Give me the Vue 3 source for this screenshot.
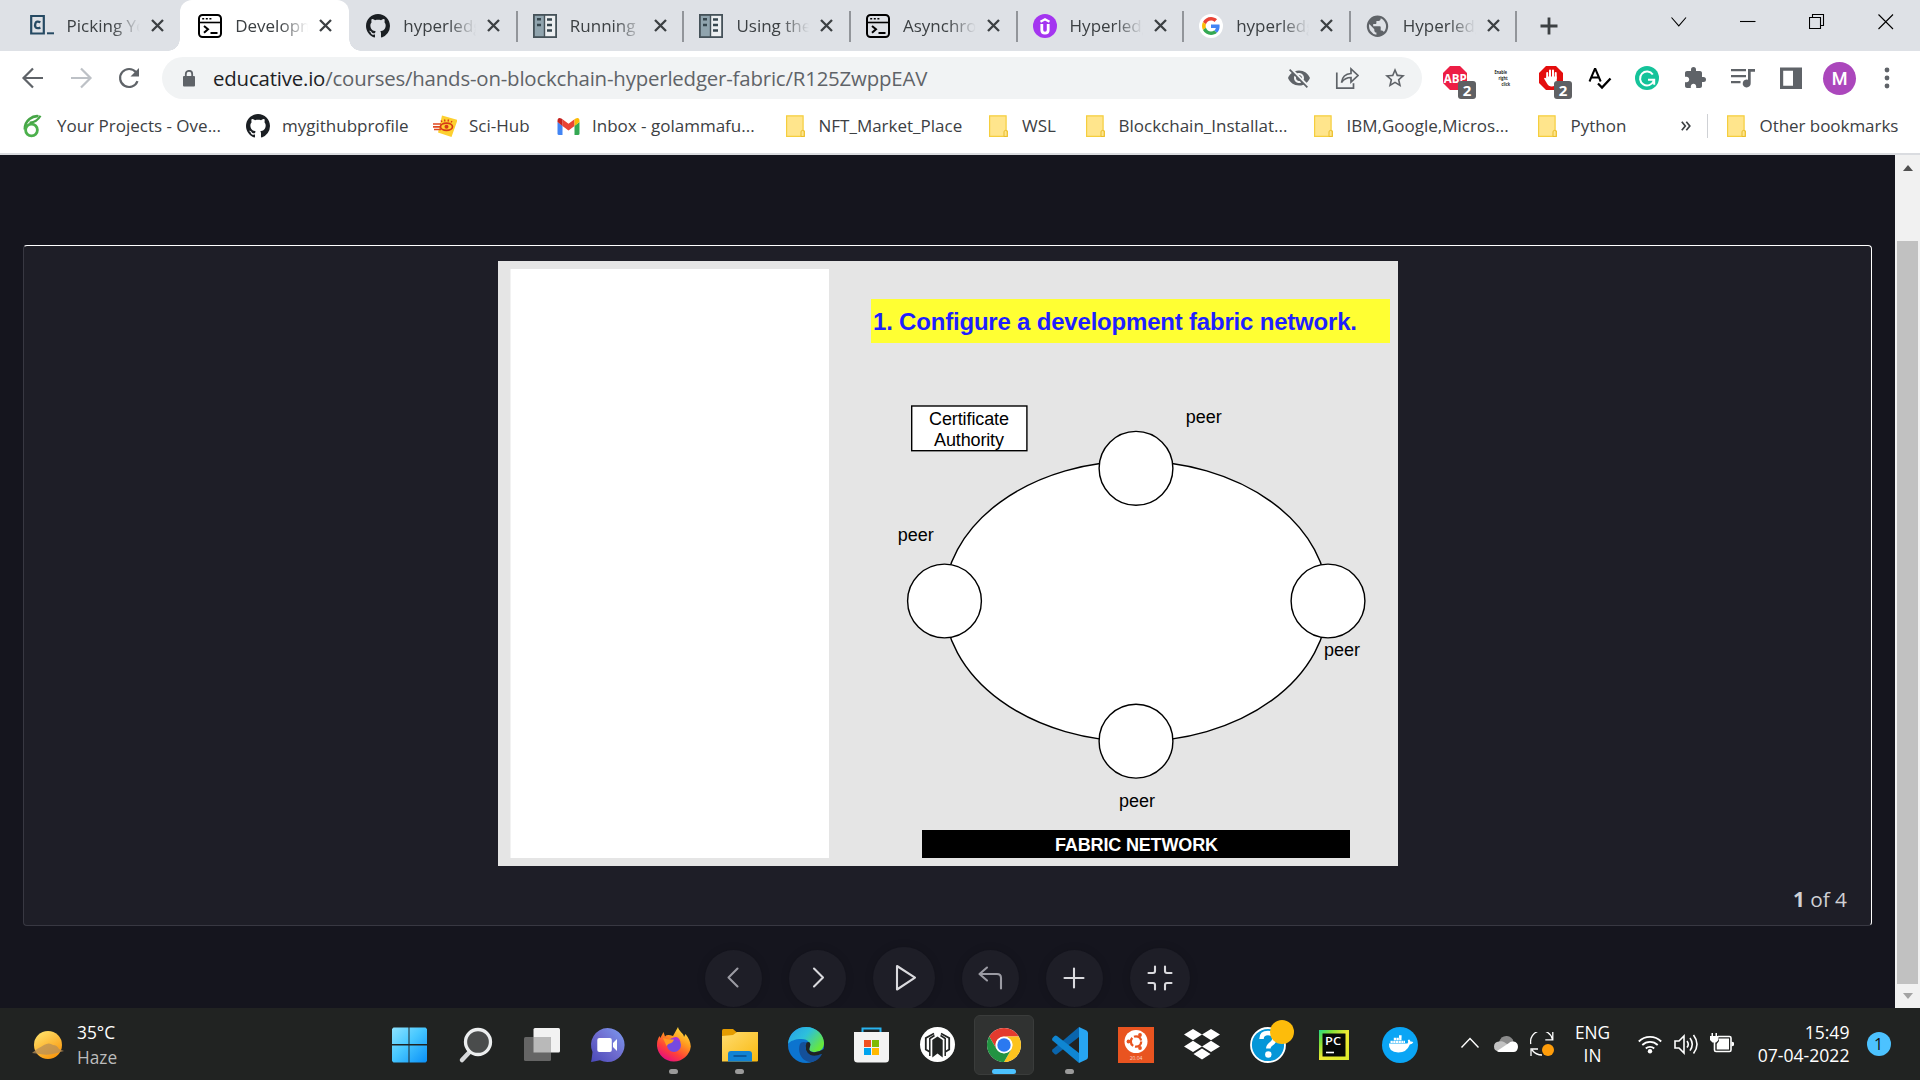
<script setup>
const octocat = '<path fill="#1b1f23" transform="scale(1.5)" d="M8 0C3.58 0 0 3.58 0 8c0 3.54 2.29 6.53 5.47 7.59.4.07.55-.17.55-.38 0-.19-.01-.82-.01-1.49-2.01.37-2.53-.49-2.69-.94-.09-.23-.48-.94-.82-1.13-.28-.15-.68-.52-.01-.53.63-.01 1.08.58 1.23.82.72 1.21 1.87.87 2.33.66.07-.52.28-.87.51-1.07-1.78-.2-3.64-.89-3.64-3.95 0-.87.31-1.59.82-2.15-.08-.2-.36-1.02.08-2.12 0 0 .67-.21 2.2.82.64-.18 1.32-.27 2-.27s1.36.09 2 .27c1.53-1.04 2.2-.82 2.2-.82.44 1.1.16 1.92.08 2.12.51.56.82 1.27.82 2.15 0 3.07-1.87 3.75-3.65 3.95.29.25.54.73.54 1.48 0 1.07-.01 1.93-.01 2.2 0 .21.15.46.55.38A8.01 8.01 0 0 0 16 8c0-4.42-3.58-8-8-8z"/>'
const terminal = '<rect x="1" y="1" width="22" height="22" rx="3.5" fill="none" stroke="#000" stroke-width="2"/><path d="M1 8.5h22" stroke="#000" stroke-width="1.6"/><path d="M4.2 4.8h2M7.8 4.8h2M11.4 4.8h2" stroke="#000" stroke-width="1.6"/><path d="M6 12l4 3.3-4 3.5M12.500 19h7" fill="none" stroke="#000" stroke-width="2"/>'
const docs = '<path fill="#455259" d="M0 0h24v24H0z"/><path fill="#90a4ae" d="M1.800 1.800h9v20.400h-9z"/><path fill="#eceff1" d="M12.200 1.800h10v20.400h-10z"/><path d="M4 5.200h4M4 11h4M14 5.500h5M14 11h5M14 16.500h5" stroke="#37474f" stroke-width="2.600"/>'
const folder = '<path fill="#ffe58c" stroke="#f5ce3e" stroke-width="1.200" d="M3.600 1.800h16.500v14.600l1.300.8v5.200H3.600z"/><path fill="#ffe58c" stroke="#e9bd2b" stroke-width="1" d="M18 22.500v-4.600q0-1.500 1.600-1.500t1.600 1.500v4.500z"/>'

const tabs = [
  { title: 'Picking Your', icon: '<path fill="none" stroke="#264a63" stroke-width="2.200" d="M1.200 2h12.600v17.500H1.200z"/><path stroke="#264a63" stroke-width="2" d="M17 19.300h7"/><path d="M10.400 8.200q-4-1.700-5 1.200-.8 2.200.2 3.800 1.400 1.800 4.800.4" fill="none" stroke="#264a63" stroke-width="2.300"/>' },
  { title: 'Development', icon: terminal, active: true },
  { title: 'hyperledger', icon: octocat },
  { title: 'Running', icon: docs },
  { title: 'Using the', icon: docs },
  { title: 'Asynchronous', icon: terminal },
  { title: 'Hyperledger', icon: '<circle cx="12" cy="12" r="12" fill="#a435f0"/><path d="M8.800 10v6q0 3.200 3.200 3.200t3.200-3.200v-6" fill="none" stroke="#fff" stroke-width="2.800"/><path d="M7.500 7.800L12 5.300l4.500 2.500" fill="none" stroke="#fff" stroke-width="2.200"/>' },
  { title: 'hyperledger', icon: '<circle cx="12" cy="12" r="12" fill="#fff"/><g transform="translate(3 3) scale(.375)"><path fill="#EA4335" d="M24 9.500c3.540 0 6.710 1.220 9.210 3.600l6.850-6.850C35.900 2.380 30.470 0 24 0 14.620 0 6.510 5.380 2.560 13.220l7.980 6.190C12.430 13.720 17.740 9.500 24 9.500z"/><path fill="#4285F4" d="M46.980 24.550c0-1.570-.15-3.090-.38-4.550H24v9.020h12.940c-.58 2.960-2.260 5.480-4.780 7.180l7.730 6c4.510-4.180 7.090-10.360 7.090-17.650z"/><path fill="#FBBC05" d="M10.530 28.590c-.48-1.450-.76-2.990-.76-4.590s.27-3.140.76-4.590l-7.980-6.190C.92 16.460 0 20.120 0 24c0 3.880.92 7.540 2.560 10.780l7.970-6.190z"/><path fill="#34A853" d="M24 48c6.480 0 11.930-2.130 15.890-5.810l-7.730-6c-2.150 1.450-4.920 2.300-8.160 2.300-6.260 0-11.570-4.220-13.470-9.910l-7.980 6.190C6.510 42.620 14.620 48 24 48z"/></g>' },
  { title: 'Hyperledger', icon: '<path fill="#5f6368" d="M11.500 1.500a10.700 10.700 0 100 21.400 10.700 10.700 0 000-21.400zm-1.100 19.200a8.600 8.600 0 01-7.100-10.600l5 5.200v1.100c0 1.200 1 2.100 2.100 2.100zm7.400-2.700a2.100 2.100 0 00-2-1.500h-1.100v-3.200c0-.6-.5-1-1.100-1H7.200V10h2.200c.6 0 1-.4 1-1V6.900h2.200c1.200 0 2.100-1 2.100-2.100v-.5a8.600 8.600 0 013.100 13.700z"/>' },
]

const bookmarks = [
  { label: 'Your Projects - Ove...', w: 225, icon: '<path d="M17.500 2.200C12 1.500 3.500 6 3.800 15.500" fill="none" stroke="#46a546" stroke-width="2.600"/><circle cx="10.500" cy="16" r="5.900" fill="none" stroke="#4cb04c" stroke-width="2.800"/><path d="M19.500 1.800q-4 7-11 6.700" fill="none" stroke="#46a546" stroke-width="2.200"/>' },
  { label: 'mygithubprofile', w: 187, icon: octocat },
  { label: 'Sci-Hub', w: 123, icon: '<path fill="#fdd030" d="M9 1.500l15.500 4.500-6 17L5 18.500l1.500-6z"/><path d="M0 10h8M0 12.800h8M1 15.500h7" stroke="#df4a20" stroke-width="1.700"/><ellipse cx="13.500" cy="12.800" rx="6" ry="3.600" fill="none" stroke="#d63a17" stroke-width="1.700"/><circle cx="13.500" cy="12.800" r="2" fill="#d63a17"/><path d="M9 8L8 6.500M12 7.500l-.5-2M15 7.500l.5-2M18 8.500l1-1.500" stroke="#d63a17" stroke-width="1.300"/>' },
  { label: 'Inbox - golammafu...', w: 226.500, icon: '<path fill="#4285f4" d="M1.500 8l5 3.800v9.200H3q-1.500 0-1.500-1.500z"/><path fill="#34a853" d="M18.500 11.800l5-3.800v11.500q0 1.500-1.500 1.500h-3.500z"/><path fill="#ea4335" d="M6.500 5.300l6 4.500 6-4.500v6.600l-6 4.500-6-4.500z"/><path fill="#c5221f" d="M1.500 7.200V8l5 3.900V5.300L5.300 4.400q-3.800-1.500-3.800 2.800z"/><path fill="#fbbc04" d="M23.500 7.200V8l-5 3.900V5.300l1.200-.9q3.800-1.500 3.800 2.800z"/>' },
  { label: 'NFT_Market_Place', w: 203.500, icon: folder },
  { label: 'WSL', w: 96.500, icon: folder },
  { label: 'Blockchain_Installat...', w: 228, icon: folder },
  { label: 'IBM,Google,Micros...', w: 224, icon: folder },
  { label: 'Python', w: 142, icon: folder },
]

const badge = '<rect x="15" y="15" width="18" height="18" rx="3" fill="#5f6063"/><text x="24" y="29.800" text-anchor="middle" font-size="15" font-weight="700" fill="#fff">2</text>'
const extensions = [
  '<path fill="#ed1e45" d="M7 0h10l7 7v10l-7 7H7l-7-7V7z"/><text x="12.300" y="17" text-anchor="middle" font-size="12.500" font-weight="700" textLength="23" lengthAdjust="spacingAndGlyphs" fill="#fff">ABP</text>' + badge,
  '<g fill="#222" font-size="4.500" font-weight="700"><text x="3.500" y="7.800" textLength="12.500" lengthAdjust="spacingAndGlyphs">Enable</text><text x="7.500" y="13.800" textLength="9" lengthAdjust="spacingAndGlyphs">right</text><text x="10.500" y="19.800" textLength="8.500" lengthAdjust="spacingAndGlyphs">click</text></g>',
  '<path fill="#e40d0d" d="M7 0h10l7 7v10l-7 7H7l-7-7V7z"/><path d="M8.200 12V7M11 11.500V4.500M14 11.500V4.500M16.700 12.500V7" stroke="#fff" stroke-width="2" stroke-linecap="round"/><path fill="#fff" d="M7.200 10.500h10.500v5.500q-1.500 4.500-5 4.500-3.200 0-4.700-3l-3-5q.8-1.500 2.500 0z"/>' + badge,
  '<path d="M2.500 15.500L7.800 3h.6l5.300 12.500M4.300 11.500h7.500" fill="none" stroke="#000" stroke-width="2"/><path d="M11 17.500l4 4 8.500-9" fill="none" stroke="#000" stroke-width="2.300"/>',
  '<circle cx="12" cy="12" r="12" fill="#15c39a"/><path d="M17.800 8.500a7 7 0 10.800 6.500M13 13.800h6.200v5" fill="none" stroke="#fff" stroke-width="2"/>',
  '<path fill="#5f6368" d="M20.500 11H19V7c0-1.100-.9-2-2-2h-4V3.500a2.500 2.500 0 00-5 0V5H4c-1.100 0-1.990.9-1.990 2v3.800H3.500c1.490 0 2.700 1.210 2.700 2.700s-1.210 2.700-2.700 2.700H2V20c0 1.100.9 2 2 2h3.800v-1.500c0-1.490 1.210-2.700 2.700-2.700s2.700 1.210 2.700 2.700V22H17c1.100 0 2-.9 2-2v-4h1.500a2.500 2.500 0 000-5z"/>',
  '<path d="M0 4.200h15M0 10.200h15M0 16.200h9.500" stroke="#5f6368" stroke-width="2.200"/><path fill="#5f6368" d="M17 3h7v2.800h-4.300v11.500a4 4 0 11-2.700-3.600z"/>',
  '<path fill="#5f6368" fill-rule="evenodd" d="M1 1.500h22v21.500H1zM4.200 4.700v15.100H14V4.700z"/>',
]

const controls = [
  { size: 57, gap: 27, dim: true, d: 'M21.500 8.500l-9 9 9 9' },
  { size: 57, gap: 27, d: 'M14 8.500l9 9-9 9' },
  { size: 62, gap: 27, d: 'M11 6v23.500l18-11.800z' },
  { size: 57, gap: 27, dim: true, d: 'M14 7.500L6.500 14l7.500 6.500M7 14h17q4 0 4 4v10.500' },
  { size: 57, gap: 27, d: 'M17 8.500v19M7.500 18h19' },
  { size: 60, gap: 0, d: 'M6.500 13H11q2 0 2-2V6.500M29.500 13H25q-2 0-2-2V6.500M6.500 23H11q2 0 2 2v4.500M29.500 23H25q-2 0-2 2v4.500' },
]

const apps = [
  { icon: '<defs><linearGradient id="win" x1="0" y1="0" x2="1" y2="1"><stop offset="0" stop-color="#8ee3ff"/><stop offset=".45" stop-color="#48c8ff"/><stop offset="1" stop-color="#0a90f8"/></linearGradient></defs><path fill="url(#win)" d="M1.500.5H16.500v16.500H0V2zM17.500.5H33.500L35 2v15H17.500zM0 18.500h16.500v17H1.500L0 34zM17.500 18.500H35V34l-1.500 1.500h-16z"/>' },
  { icon: '<path d="M12.500 24L4 33" stroke="#d6d8da" stroke-width="4.500" stroke-linecap="round"/><circle cx="20" cy="15" r="12.500" fill="#4a4c4c" stroke="#eceeef" stroke-width="3.300"/>' },
  { icon: '<rect x="9.500" y="1" width="26.500" height="24.500" rx="1.500" fill="#f2f2f2"/><rect x="0" y="10" width="27" height="24" rx="1.500" fill="#656565"/><path fill="#b9b9b9" d="M9.500 10H27v15.500H9.500z"/>' },
  { icon: '<defs><linearGradient id="chat" x1="1" y1="0" x2="0" y2="1"><stop offset="0" stop-color="#7b9cf0"/><stop offset=".5" stop-color="#6f6ccf"/><stop offset="1" stop-color="#4a49b8"/></linearGradient></defs><path fill="url(#chat)" d="M17.500 1a17 17 0 11-7.500 32.200L1.500 35q-1-.5 0-2l1-8A17 17 0 0117.500 1z"/><rect x="7.300" y="11" width="14.500" height="14" rx="2" fill="#fff"/><path fill="#fff" d="M23 16l4-4v12l-4-4z"/>' },
  { run: true, icon: '<defs><linearGradient id="ff" x1=".9" y1="0" x2=".3" y2="1"><stop offset="0" stop-color="#fff04a"/><stop offset=".4" stop-color="#ff9a1e"/><stop offset=".72" stop-color="#ff4138"/><stop offset="1" stop-color="#e50c82"/></linearGradient></defs><path fill="url(#ff)" d="M22 0c1 5 6 6 6 10l1.500-3q5 6 5.300 12.500A17 17 0 011 19Q.8 13 3.500 9l.8 2L7.500 5l1.500 4.500q2-2.500 8-.5z"/><circle cx="18" cy="18" r="7" fill="#7649e0"/><path fill="#a832d9" d="M15 12q7-5 9.500 3-5-3-9.500-3z"/><path fill="#ff9b20" d="M7 11q6 2 11 1.500-1 3.500-5.500 4.500l-2 2z"/>' },
  { run: true, icon: '<path fill="#e39b00" d="M0 3.500Q0 2 1.500 2H11l4 3.500V12H0z"/><defs><linearGradient id="fold" x1="0" y1="0" x2="1" y2="1"><stop offset="0" stop-color="#ffdc70"/><stop offset="1" stop-color="#f9b90f"/></linearGradient></defs><path fill="url(#fold)" d="M0 9l11-1 4-3h21v28.500q0 1-1 1H0z"/><path fill="#1183d4" d="M6 34.500V27q0-3 3-3h18q3 0 3 3v7.500z"/><path d="M11.500 29h13" stroke="#0a5a9e" stroke-width="2"/>' },
  { icon: '<defs><linearGradient id="ed" x1="0" y1="0" x2="1" y2=".6"><stop offset="0" stop-color="#279de8"/><stop offset=".5" stop-color="#2dc0dc"/><stop offset="1" stop-color="#67e83c"/></linearGradient></defs><circle cx="18" cy="18" r="18" fill="#0c74cf"/><path fill="url(#ed)" d="M0 17C1 6 9 0 18 0c11 0 18 8 18 16 0 6-4 9-9 9-4 0-7-1.500-5.500-4 2-4-1-9-8-9C7 12 2 14 0 17z"/><path fill="#14509a" d="M12 17c-3 8 2 18 11 18 5 0 9-4 11-8-3 1-6 2-10 1-6-2-8-7-5-12-3-2-6-1-7 1z"/><path fill="#202322" d="M18.500 15.500q3.500-1.500 4 2-.5 2-1 3.500-1 3 3 4 5 1 11.500-3v5l-2.500 0q-6 3-11 1-7-4-4-12.500z"/>' },
  { icon: '<path d="M8.500 7V1.500h18V7" fill="none" stroke="#28b3ef" stroke-width="2"/><path fill="#f3f3f3" d="M0 5h35v27q0 3.500-3.500 3.500h-28Q0 35.500 0 32z"/><path fill="#f25022" d="M10 13h7v7h-7z"/><path fill="#7fba00" d="M18 13h7v7h-7z"/><path fill="#00a4ef" d="M10 21h7v7h-7z"/><path fill="#ffb900" d="M18 21h7v7h-7z"/>' },
  { icon: '<circle cx="17.500" cy="17.500" r="17.500" fill="#fff"/><path d="M14 6.500L5.800 11v11.500l3.800 2.200M21 6.500l8.200 4.500v11.500l-3.800 2.200" fill="none" stroke="#202322" stroke-width="1.800"/><path d="M14.500 8.500l-4.700 3v17.500M20.500 8.500l4.700 3v17.500" fill="none" stroke="#202322" stroke-width="1.500"/><path fill="#202322" d="M12.300 13l5.200-3.500 5.200 3.500v17.500l-5.200-4-5.200 4z"/>' },
  { active: true, icon: '<circle cx="18" cy="18" r="17" fill="#fff"/><path fill="#e33b2e" d="M3.280 9.500A17 17 0 0132.720 9.500H18a8.500 8.500 0 00-7.360 12.750z"/><path fill="#fcc31e" d="M32.720 9.500A17 17 0 0118 35l7.360-12.750A8.500 8.500 0 0018 9.500z"/><path fill="#229342" d="M18 35A17 17 0 013.280 9.500l7.360 12.750A8.500 8.500 0 0025.360 22.250z"/><circle cx="18" cy="18" r="8.300" fill="#fff"/><circle cx="18" cy="18" r="6.700" fill="#2b79f0"/>' },
  { run: true, icon: '<path fill="#0a65ad" d="M27 0v10L5 27q-1.500 1-2.500 0L.5 25q-1-1 0-2.500z"/><path fill="#0f86d2" d="M27 36V26L5 9Q3.500 8 2.500 9L.5 11q-1 1 0 2.500z"/><path fill="#27a5f2" d="M27 0l7.500 3.500Q36 4.500 36 6v24q0 1.500-1.500 2.500L27 36z"/>' },
  { icon: '<path fill="#e95420" d="M0 0h36v36H0z"/><circle cx="18" cy="14.500" r="11.500" fill="#fff"/><circle cx="18" cy="14.500" r="5.200" fill="none" stroke="#e95420" stroke-width="2.300" stroke-dasharray="9 1.900"/><circle cx="10.500" cy="14.500" r="1.900" fill="#e95420"/><circle cx="22" cy="8" r="1.900" fill="#e95420"/><circle cx="22" cy="21" r="1.900" fill="#e95420"/><text x="18" y="33" text-anchor="middle" font-size="5" fill="#fbd9cc">20.04</text>' },
  { icon: '<path fill="#fff" d="M9 2l9 5.500-9 5.800L0 7.500zM27 2l9 5.500-9 5.800-9-5.800zM9 13.700l9 5.700-9 5.600-9-5.600zM27 13.700l9 5.700-9 5.600-9-5.600zM9.500 27l8.500-5.500 8.500 5.500L18 32.500z"/>' },
  { icon: '<circle cx="18" cy="18" r="17" fill="#0496d8" stroke="#fff" stroke-width="1.800"/><path d="M11.500 12q0-6 6.500-6t6.500 5.500q0 3-3.500 5.500-2.700 2-2.700 4.500" fill="none" stroke="#fff" stroke-width="4.500"/><circle cx="18.300" cy="27.500" r="3.200" fill="#fff"/><circle cx="32" cy="5" r="12" fill="#fdbc0b"/>' },
  { icon: '<defs><linearGradient id="pc" x1="0" y1="0" x2="1" y2="1"><stop offset="0" stop-color="#21d789"/><stop offset=".22" stop-color="#7be03a"/><stop offset=".5" stop-color="#f0e932"/><stop offset="1" stop-color="#d9ea2c"/></linearGradient></defs><path fill="url(#pc)" d="M3 3h30v30H3z"/><path fill="#070907" d="M6.500 6.500h23v23h-23z"/><text x="9" y="18.300" font-size="11.500" font-weight="600" textLength="16" lengthAdjust="spacingAndGlyphs" fill="#fff">PC</text><path d="M10 25.500h8" stroke="#fff" stroke-width="1.600"/>' },
  { icon: '<circle cx="18" cy="18" r="18" fill="#0aa5f5"/><path fill="#fff" d="M7 16.500h18.500q1.300-1 .3-3.500l1.500-.5 1.500 2.200q1.500-.3 2.500.5-.8 2-3.500 2.200-3 8-11.500 8-10 0-9.300-8.900z"/><path d="M8.500 14.800h14.500M11.800 12h8M17 9.500h3" stroke="#fff" stroke-width="2.300" stroke-dasharray="2.300 .4"/>' },
]

const peers = [
  { cx: 638, cy: 207.300, tx: 687.700, ty: 161.700 },
  { cx: 446.500, cy: 340, tx: 399.700, ty: 280 },
  { cx: 830, cy: 340, tx: 826, ty: 395 },
  { cx: 638, cy: 480.200, tx: 621, ty: 546 },
]
</script>

<template>
  <div class="desktop">
    <header class="tabstrip">
      <div v-for="(t, i) in tabs" :key="i" class="tab" :class="{ active: t.active, plain: i === 0 }">
        <svg class="favicon" viewBox="0 0 24 24" v-html="t.icon" />
        <span class="tab-title">{{ t.title }}</span>
        <svg class="close" viewBox="0 0 13 13"><path d="M1 1l11 11M12 1L1 12" stroke="#3c4043" stroke-width="2.300" /></svg>
      </div>
      <svg class="newtab" viewBox="0 0 18 18"><path d="M9 .5v17M.5 9h17" stroke="#3c4043" stroke-width="2.800" /></svg>
      <div class="window-buttons">
        <svg viewBox="0 0 16 16"><path d="M.5 3.500l7.300 8.300L15 3.500" /></svg>
        <svg viewBox="0 0 16 16"><path d="M0 7.500h15.500" /></svg>
        <svg viewBox="0 0 16 16"><path d="M.5 3.500h11v11H.5zM3.500 3.500v-3h11v11h-3" /></svg>
        <svg viewBox="0 0 16 16"><path d="M.5.500l14.500 14.500M15 .5L.5 15" /></svg>
      </div>
    </header>

    <div class="toolbar">
      <svg class="nav" viewBox="0 0 24 24"><path d="M22 12H3M12 2.500L2.500 12l9.500 9.500" stroke="#5f6368" /></svg>
      <svg class="nav" viewBox="0 0 24 24"><path d="M2 12h19M12 2.500l9.500 9.500-9.500 9.500" stroke="#bdc1c6" /></svg>
      <svg class="nav" viewBox="0 0 24 24"><path d="M20.500 15.200a9 9 0 11-1.500-9" stroke="#5f6368" /><path fill="#5f6368" d="M22 2v8.500h-8.500z" /></svg>
      <div class="omnibox">
        <svg class="lock" viewBox="0 0 14 17"><path fill="#5f6368" d="M2 6h10q1 0 1 1v8.500q0 1-1 1H2q-1 0-1-1V7q0-1 1-1z" /><path d="M3.800 6V4a3.200 3.200 0 016.400 0v2" fill="none" stroke="#5f6368" stroke-width="1.800" /></svg>
        <span class="url"><b>educative.io</b>/courses/hands-on-blockchain-hyperledger-fabric/R125ZwppEAV</span>
        <svg class="act" viewBox="0 0 24 24"><path fill="#5f6368" d="M12 7c2.760 0 5 2.240 5 5 0 .65-.13 1.260-.36 1.830l2.920 2.920c1.510-1.260 2.700-2.890 3.430-4.750-1.730-4.390-6-7.500-11-7.500-1.400 0-2.740.25-3.980.7l2.160 2.160C10.740 7.130 11.350 7 12 7zM2 4.270l2.280 2.280.46.46C3.080 8.300 1.780 10.020 1 12c1.730 4.390 6 7.500 11 7.500 1.550 0 3.030-.3 4.380-.84l.42.42L19.730 22 21 20.730 3.270 3 2 4.270zM7.530 9.800l1.550 1.550c-.05.21-.08.43-.08.65 0 1.660 1.340 3 3 3 .22 0 .44-.03.65-.08l1.550 1.550c-.67.33-1.410.53-2.200.53-2.760 0-5-2.240-5-5 0-.79.2-1.530.53-2.200zm4.310-.78l3.150 3.150.02-.16c0-1.660-1.340-3-3-3l-.17.01z" /></svg>
        <svg class="act" viewBox="0 0 24 24"><path d="M1.800 6.500v15.700h16.700v-5M6.500 16.500Q7.500 8 16 7.500v-4.500L23 9.500 16 16v-4.500q-6 0-9.500 5z" fill="none" stroke="#5f6368" stroke-width="1.700" /></svg>
        <svg class="act" viewBox="0 0 24 24"><path fill="#5f6368" d="M22 9.240l-7.190-.62L12 2 9.190 8.630 2 9.240l5.460 4.730L5.820 21 12 17.270 18.180 21l-1.630-7.030L22 9.240zM12 15.400l-3.760 2.270 1-4.280-3.320-2.880 4.380-.38L12 6.100l1.710 4.040 4.380.38-3.320 2.880 1 4.280L12 15.400z" /></svg>
      </div>
      <div class="extensions">
        <svg v-for="(e, i) in extensions" :key="i" viewBox="0 0 24 24" v-html="e" />
      </div>
      <span class="avatar">M</span>
      <svg class="kebab" viewBox="0 0 6 22"><circle v-for="y in [3, 11, 19]" :key="y" cx="3" :cy="y" r="2.400" fill="#5f6368" /></svg>
    </div>

    <nav class="bookmarks">
      <div v-for="b in bookmarks" :key="b.label" class="bookmark" :style="{ width: b.w + 'px' }">
        <svg viewBox="0 0 24 24" v-html="b.icon" /><span>{{ b.label }}</span>
      </div>
      <svg class="more" viewBox="0 0 10 10"><path d="M.8.800L4.300 5 .8 9.200M5.300.8L8.800 5 5.300 9.200" fill="none" stroke="#3c4043" stroke-width="1.700" /></svg>
      <i class="divider" />
      <div class="bookmark other"><svg viewBox="0 0 24 24" v-html="folder" /><span>Other bookmarks</span></div>
    </nav>

    <main class="viewport">
      <div class="page">
        <section class="card">
          <svg class="slide" viewBox="0 0 900 605">
            <rect width="900" height="605" fill="#e5e5e5" />
            <rect x="12.500" y="8" width="318.500" height="589" fill="#fff" />
            <rect x="373" y="38" width="519" height="44" fill="#ffff33" />
            <text x="375" y="69" class="title" textLength="484">1. Configure a development fabric network.</text>
            <rect x="413.700" y="145" width="115.200" height="44.700" fill="#fff" stroke="#000" stroke-width="1.400" />
            <text x="471" y="163.800" text-anchor="middle" textLength="80">Certificate</text>
            <text x="471" y="184.800" text-anchor="middle" textLength="70">Authority</text>
            <ellipse cx="638" cy="340.200" rx="192" ry="140.200" fill="#fff" stroke="#000" stroke-width="1.400" />
            <g v-for="(p, i) in peers" :key="i">
              <circle :cx="p.cx" :cy="p.cy" r="36.900" fill="#fff" stroke="#000" stroke-width="1.400" />
              <text :x="p.tx" :y="p.ty" textLength="36">peer</text>
            </g>
            <rect x="424" y="569" width="428" height="28" fill="#000" />
            <text x="638.500" y="589.700" text-anchor="middle" class="banner" textLength="163">FABRIC NETWORK</text>
          </svg>
          <p class="counter"><b>1</b> of 4</p>
        </section>
        <div class="controls">
          <button v-for="(c, i) in controls" :key="i" :class="{ dim: c.dim }" :style="{ width: c.size + 'px', height: c.size + 'px', marginRight: c.gap + 'px' }">
            <svg viewBox="0 0 36 36"><path :d="c.d" /></svg>
          </button>
        </div>
      </div>
      <div class="scrollbar">
        <i class="up" /><i class="thumb" /><i class="down" />
      </div>
    </main>

    <footer class="taskbar">
      <div class="weather">
        <svg viewBox="0 0 32 32"><defs><linearGradient id="sun" x1="0" y1="0" x2=".6" y2="1"><stop offset="0" stop-color="#ffe873" /><stop offset="1" stop-color="#fb9a10" /></linearGradient></defs><circle cx="16" cy="16" r="14" fill="url(#sun)" /><path fill="#b98f55" opacity=".75" d="M5 20q4-2 7-4 5-3 9 0 4 0 6 4l5 2-7 2q-9 3-17 1L0 24z" /></svg>
        <div><span>35°C</span><span class="muted">Haze</span></div>
      </div>
      <div class="apps">
        <div v-for="(a, i) in apps" :key="i" class="app" :class="{ current: a.active, running: a.run }">
          <svg viewBox="0 0 36 36" v-html="a.icon" />
        </div>
      </div>
      <div class="tray">
        <svg class="ic" viewBox="0 0 24 24"><path d="M3.500 15.500L12 6.500l8.500 9" fill="none" stroke="#fff" stroke-width="1.400" /></svg>
        <svg class="ic" viewBox="0 0 24 24"><path fill="#8b8b8b" d="M5 10q2-6.500 8-6 5 .5 6.500 5.500L12 14z" /><path fill="#c2c2c2" d="M5 19.500q-5-.5-5-5T5 9.500q3-.8 5 .5l6 4z" /><path fill="#fff" d="M3 19l12-8q1-2 4.500-1.500Q24 10 24 15q-.5 5-4.500 5H5q-1 0-2-1z" /></svg>
        <svg class="ic" viewBox="0 0 24 24"><path d="M.8 12A10.500 10.500 0 0122.500 7.500M22.800 0v7.800h-7.500M1 24v-7h7M2 18q4 5 10 5" fill="none" stroke="#fff" stroke-width="1.300" /><circle cx="18" cy="18" r="6" fill="#ff9d0a" /></svg>
        <div class="lang"><span>ENG</span><span>IN</span></div>
        <svg class="ic" viewBox="0 0 24 24"><path d="M.8 9.500a16 16 0 0122.400 0M4.300 13a11 11 0 0115.400 0M7.800 16.500a6 6 0 018.400 0" fill="none" stroke="#fff" stroke-width="1.800" /><circle cx="12" cy="19.300" r="2.200" fill="#fff" /></svg>
        <svg class="ic" viewBox="0 0 24 24"><path d="M1 9h4l5-5v17l-5-5H1zM13 9q2.500 3.300 0 6.600M16 6q4.500 6.300 0 12.600M19.500 3q7 9.300 0 18.500" fill="none" stroke="#fff" stroke-width="1.600" /></svg>
        <svg class="ic" viewBox="0 0 24 24"><path d="M8 4.500h11.500q1.500 0 1.500 1.500v12q0 1.500-1.500 1.500H6q-1.500 0-1.500-1.500v-8" fill="none" stroke="#fff" stroke-width="1.600" /><path fill="#fff" d="M9 6.500h10v11H6.700V12L9 9zM21.500 9.500l2.500 1v3l-2.500 1zM0 4h1.500V1H3v3h2.500V1H7v3h1.500v4L6 10.500H2.500L0 8z" /></svg>
        <div class="clock"><span>15:49</span><span>07-04-2022</span></div>
        <span class="notif">1</span>
      </div>
    </footer>
  </div>
</template>

<style>
body { margin: 0; overflow: hidden; }
</style>

<style scoped>
* { box-sizing: border-box; }
.desktop { width: 1920px; height: 1080px; display: flex; flex-direction: column; overflow: hidden; font: 17px/24px "Open Sans", "Noto Sans", sans-serif; color: #3c4043; background: #fff; }
svg { display: block; flex: none; }

.tabstrip { height: 51px; flex: none; background: #dee1e6; display: flex; padding-left: 13.6px; }
.tab { width: 166.6px; height: 51px; flex: none; display: flex; align-items: center; padding-left: 16px; position: relative; }
.tab.plain { width: 170px; }
.tab::after { content: ""; position: absolute; right: -1px; top: 11px; width: 2px; height: 31px; background: #92959a; }
.tab.active::after, .tab.plain::after { display: none; }
.tab.active { background: #fff; width: 169px; margin: 0 1px 0 -3.4px; padding-left: 18px; border-radius: 12px 12px 0 0; }
.tab.active::before { content: ""; position: absolute; z-index: 1; bottom: 0; left: -12px; right: -12px; height: 12px; background: radial-gradient(circle at 0 0, transparent 11.5px, #fff 12px) left / 12px 12px no-repeat, radial-gradient(circle at 100% 0, transparent 11.5px, #fff 12px) right / 12px 12px no-repeat; }
.favicon { width: 24px; height: 24px; margin-top: 1px; }
.tab-title { width: 73px; margin-left: 13px; padding-top: 1px; overflow: hidden; white-space: nowrap; -webkit-mask-image: linear-gradient(90deg, #000 62%, transparent 100%); mask-image: linear-gradient(90deg, #000 62%, transparent 100%); }
.close { width: 13px; height: 13px; margin-left: 11px; }
.newtab { width: 18px; height: 18px; margin: 17px 0 0 24px; }
.window-buttons { margin: 14px 26px 0 auto; display: flex; gap: 53px; }
.window-buttons svg { width: 16px; height: 16px; fill: none; stroke: #000; stroke-width: 1.1; }

.toolbar { height: 54px; flex: none; display: flex; align-items: center; padding-left: 21px; }
.nav { width: 24px; height: 24px; margin-right: 24px; fill: none; stroke-width: 2.200; }
.omnibox { width: 1260px; height: 42px; margin-left: -3px; flex: none; border-radius: 21px; background: #f1f3f4; display: flex; align-items: center; padding: 0 15px 0 20px; }
.lock { width: 14px; height: 17px; }
.url { flex: 1; margin-left: 17px; font-size: 20.400px; letter-spacing: -.18px; color: #5f6368; white-space: nowrap; }
.url b { font-weight: 400; color: #202124; }
.act { width: 24px; height: 24px; margin-left: 24px; }
.extensions { display: flex; gap: 24px; margin-left: 21px; }
.extensions svg { width: 24px; height: 24px; overflow: visible; }
.avatar { width: 33px; height: 33px; margin-left: 20px; border-radius: 50%; background: #ab47bc; color: #fff; font: 500 18px/33px Roboto, sans-serif; text-align: center; }
.kebab { width: 6px; height: 22px; margin-left: 28px; }

.bookmarks { height: 50px; flex: none; display: flex; align-items: center; padding: 0 0 7px 21px; border-bottom: 2px solid #dadce0; }
.bookmark { display: flex; align-items: center; flex: none; white-space: nowrap; }
.bookmark svg { width: 24px; height: 24px; margin-right: 12px; }
.bookmark span { padding-top: 1px; }
.bookmark.other { letter-spacing: -.05px; }
.more { width: 10px; height: 10px; margin-left: 4px; }
.divider { width: 1px; height: 24px; background: #cfd1d5; margin: 0 16px 0 16px; }

.viewport { height: 853px; flex: none; display: flex; }
.page { width: 1895px; height: 853px; overflow: hidden; background: #15151e; padding: 90px 23px 0; }
.card { height: 681px; width: 1849px; background: #1e1e27; border: 1px solid #383842; border-top-color: #fff; border-right-color: #fff; border-radius: 4px; padding-top: 15px; display: flex; flex-direction: column; align-items: flex-end; }
.slide { width: 900px; height: 605px; margin-right: 473px; font: 18px "Liberation Sans", sans-serif; }
.slide text { fill: #000; }
.slide .title { font-size: 24px; font-weight: 700; fill: #1f1fff; }
.slide .banner { font-weight: 700; fill: #fff; }
.counter { margin: 20px 24px 0 0; font-size: 20.800px; line-height: 26px; color: #d0d0d4; }
.controls { display: flex; align-items: center; height: 62px; margin: 21px 0 0 682px; }
.controls button { border: 0; padding: 0; border-radius: 50%; background: #1e1e27; display: flex; align-items: center; justify-content: center; flex: none; box-shadow: 0 0 8px rgba(0, 0, 0, .15); }
.controls svg { width: 36px; height: 36px; fill: none; stroke: #dadade; stroke-width: 2.100; stroke-linejoin: round; stroke-linecap: round; }
.controls .dim svg { stroke: #9b9ba3; }
.scrollbar { width: 25px; background: #f1f1f1; display: flex; flex-direction: column; align-items: center; }
.up { margin-top: 10px; border: 5.5px solid transparent; border-top: 0; border-bottom: 6px solid #505050; }
.thumb { width: 21px; height: 743px; margin-top: 70px; background: #c1c1c1; }
.down { margin-top: 9px; border: 5.5px solid transparent; border-bottom: 0; border-top: 6px solid #a3a3a3; }

.taskbar { height: 72px; flex: none; background: #212322; color: #fff; display: flex; }
.weather { width: 376.5px; flex: none; display: flex; padding: 21px 0 0 32px; }
.weather svg { width: 32px; height: 32px; }
.weather div { margin: -8px 0 0 13px; font-size: 17.300px; }
.weather span, .lang span, .clock span { display: block; }
.weather .muted { color: #bcbcbc; padding-top: 1px; }
.apps { display: flex; padding-top: 7px; }
.app { width: 60px; height: 60px; margin: 0 3px; border-radius: 6px; display: flex; justify-content: center; padding-top: 12px; position: relative; }
.app svg { width: 36px; height: 36px; overflow: visible; }
.app.current { background: #303231; border: 1px solid #3a3c3b; padding-top: 11px; }
.app.running::after, .app.current::after { content: ""; position: absolute; bottom: 1px; width: 9px; height: 5px; border-radius: 3px; background: #9a9a9a; }
.app.current::after { width: 24px; background: #4cc2ff; bottom: 0; }
.tray { display: flex; align-items: center; margin-left: 25px; }
.ic { width: 24px; height: 24px; margin-right: 12px; }
.lang { width: 48px; margin: 0 21px 0 3px; line-height: 23px; text-align: center; font-size: 17.300px; }
.clock { width: 104px; line-height: 23px; text-align: right; font-size: 17.600px; white-space: nowrap; }
.notif { width: 24px; height: 24px; margin-left: 17px; border-radius: 50%; background: #4cc2ff; color: #111; text-align: center; font-size: 16px; }
</style>
